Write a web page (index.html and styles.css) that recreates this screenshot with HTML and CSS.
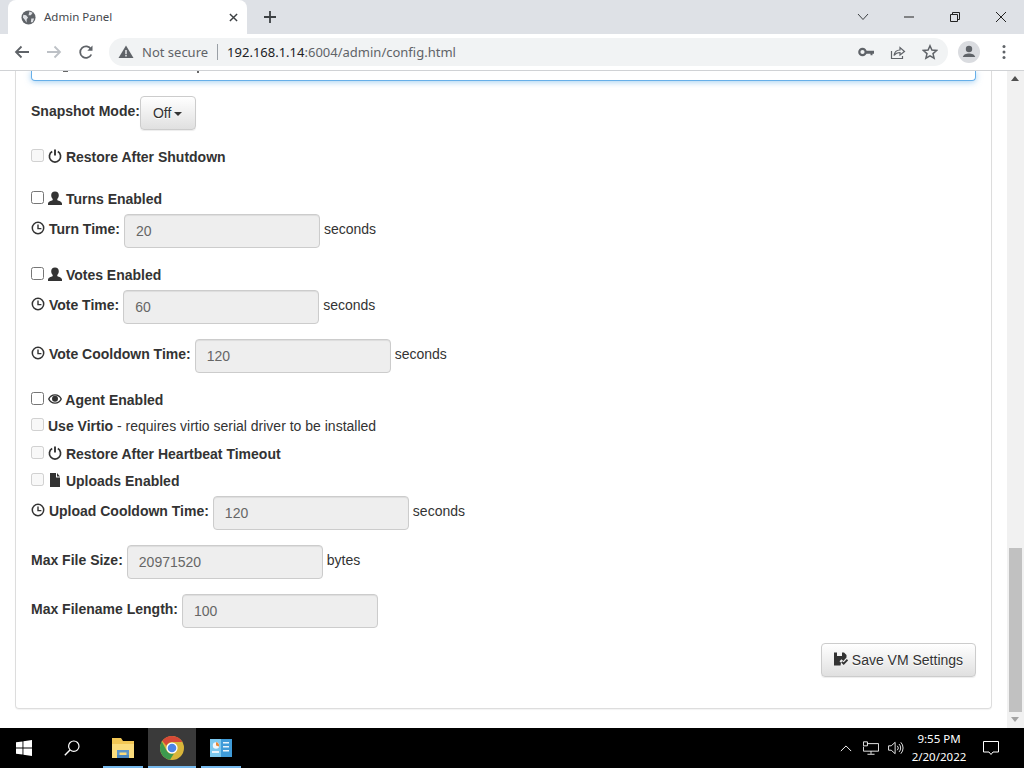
FILE: index.html
```html
<!DOCTYPE html>
<html lang="en">
<head>
<meta charset="utf-8">
<title>Admin Panel</title>
<link rel="stylesheet" href="styles.css">
</head>
<body>
<svg class="sprite" width="0" height="0" aria-hidden="true">
  <symbol id="i-power" viewBox="0 0 14 14"><path d="M4.200 2.600a5.600 5.600 0 1 0 5.600 0" fill="none" stroke="currentColor" stroke-width="1.700"/><path d="M7 .4v6.200" stroke="currentColor" stroke-width="1.900"/></symbol>
  <symbol id="i-user" viewBox="0 0 14 14"><path d="M7 .5c2.500 0 3.800 1.700 3.800 3.800 0 1.600-.8 3-1.500 3.700v1c0 .6 4.500 1.100 4.700 3.500V14H0v-1.500c.2-2.400 4.700-2.900 4.700-3.500V8C4 7.300 3.200 5.900 3.200 4.300 3.200 2.200 4.500.5 7 .5z" fill="currentColor"/></symbol>
  <symbol id="i-clock" viewBox="0 0 14 14"><circle cx="7" cy="7" r="5.700" fill="none" stroke="currentColor" stroke-width="1.500"/><path d="M7 3.400V7.600H10.400" fill="none" stroke="currentColor" stroke-width="1.400"/></symbol>
  <symbol id="i-eye" viewBox="0 0 14 14"><path d="M7 2.200C3.800 2.200 1.200 4.200 0 7c1.200 2.800 3.800 4.800 7 4.800s5.800-2 7-4.800c-1.200-2.800-3.800-4.800-7-4.800z" fill="currentColor"/><path d="M1.500 7C2.600 5 4.600 3.500 7 3.500S11.400 5 12.500 7c-1.100 2-3.100 3.500-5.500 3.500S2.600 9 1.500 7z" fill="#fff"/><circle cx="7" cy="6.800" r="3" fill="currentColor"/></symbol>
  <symbol id="i-file" viewBox="0 0 14 14"><path d="M2 0h6v4.500h4V14H2z M9 0l3 3.500H9z" fill="currentColor"/></symbol>
  <symbol id="i-floppy" viewBox="0 0 14 14"><path d="M0 .5h3v3.500h5V.5h2l2.500 2.500v2.500L9.300 9 7.500 7.200 5.500 9.200 7 10.700 6.500 13.500H0z" fill="currentColor"/><path d="M7.800 9.800l1.900 1.900 3.800-4" fill="none" stroke="currentColor" stroke-width="1.800"/></symbol>
</svg>

<header class="tabstrip">
  <div class="tab">
    <svg class="favicon" viewBox="0 0 16 16"><circle cx="8" cy="8" r="7.500" fill="#5f6368"/><path d="M2.500 5l3 .5 2 2.500-1.500 2v3.500L4 10.500 2 8zM9 1.500l3.500 1.500-2 2.500H8zM11 9h3l-1.500 4L10.500 13z" fill="#dfe1e5"/></svg>
    <span class="tab-title">Admin Panel</span>
    <svg class="tab-close" viewBox="0 0 10 10"><path d="M1 1l8 8M9 1l-8 8" stroke="#3c4043" stroke-width="1.600"/></svg>
  </div>
  <svg class="new-tab" viewBox="0 0 12 12"><path d="M6 0v12M0 6h12" stroke="#3c4043" stroke-width="1.800"/></svg>
  <div class="window-controls">
    <svg class="win-btn" viewBox="0 0 46 16"><path d="M18 5l5 5.500L28 5" fill="none" stroke="#3c4043" stroke-width="1"/></svg>
    <svg class="win-btn" viewBox="0 0 46 16"><path d="M18 8h10" stroke="#222" stroke-width="1"/></svg>
    <svg class="win-btn" viewBox="0 0 46 16"><path d="M18.500 5.500h7v7h-7zM20.500 5.500v-2h7v7h-2" fill="none" stroke="#222" stroke-width="1"/></svg>
    <svg class="win-btn" viewBox="0 0 46 16"><path d="M18 3l10 10M28 3L18 13" stroke="#222" stroke-width="1"/></svg>
  </div>
</header>

<nav class="toolbar">
  <svg class="tool" viewBox="0 0 32 16"><path d="M23 8H10M15.500 2.500L10 8l5.500 5.500" fill="none" stroke="#5f6368" stroke-width="1.800"/></svg>
  <svg class="tool" viewBox="0 0 32 16"><path d="M9 8h13M16.500 2.500L22 8l-5.500 5.500" fill="none" stroke="#bdc1c6" stroke-width="1.800"/></svg>
  <svg class="tool" viewBox="0 0 32 16"><path d="M21.300 10.500a5.800 5.800 0 1 1-.3-5.300" fill="none" stroke="#5f6368" stroke-width="1.800"/><path d="M22.500 1.500v5.200h-5.200z" fill="#5f6368"/></svg>
  <div class="omnibox">
    <svg class="warn" viewBox="0 0 16 16"><path d="M8 1.500L15.500 14H.5z" fill="#5f6368"/><path d="M7.300 6h1.400v4.200H7.300zM7.300 11h1.400v1.400H7.300z" fill="#f1f3f4"/></svg>
    <span class="not-secure">Not secure</span>
    <span class="divider"></span>
    <span class="url"><span class="host">192.168.1.14</span>:6004/admin/config.html</span>
    <span class="omni-icons">
      <svg class="omni-icon" viewBox="0 0 16 16"><circle cx="4.500" cy="8" r="3.200" fill="none" stroke="#5f6368" stroke-width="2.200"/><path d="M7.500 6.700H16V9.800H14.500V11.300H12.500V9.800H7.500z" fill="#5f6368"/></svg>
      <svg class="omni-icon" viewBox="0 0 16 16"><path d="M1.500 7v7.500h11V12" fill="none" stroke="#5f6368" stroke-width="1.200"/><path d="M4 11.500c.5-3.500 3-5.500 6-5.500V3.500L14.500 7.500 10 11V8.500c-2.500 0-4.500 1-6 3z" fill="none" stroke="#5f6368" stroke-width="1.200"/></svg>
      <svg class="omni-icon" viewBox="0 0 16 16"><path d="M8 1.800l1.900 4.300 4.700.4-3.600 3.100 1.100 4.600L8 11.800l-4.100 2.400L5 9.600 1.400 6.500l4.700-.4z" fill="none" stroke="#5f6368" stroke-width="1.500"/></svg>
    </span>
  </div>
  <svg class="avatar" viewBox="0 0 22 22"><circle cx="11" cy="11" r="11" fill="#dadce0"/><circle cx="11" cy="8" r="3.200" fill="#5f6368"/><path d="M4.800 16c.5-2.500 3.500-3.600 6.200-3.600s5.700 1.100 6.200 3.600z" fill="#5f6368"/></svg>
  <svg class="kebab" viewBox="0 0 4 16"><circle cx="2" cy="2.500" r="1.500" fill="#5f6368"/><circle cx="2" cy="8" r="1.500" fill="#5f6368"/><circle cx="2" cy="13.500" r="1.500" fill="#5f6368"/></svg>
</nav>

<div class="viewport">
  <main class="page">
    <form class="panel">
      <div class="textarea-tail"><span class="tail-g"></span><span class="tail-p"></span></div>

      <div class="field gap-15 snapshot">
        <label class="lbl">Snapshot Mode:</label>
        <button type="button" class="btn off-btn">Off<span class="caret"></span></button>
      </div>

      <div class="check gap-17"><input type="checkbox" disabled><b><svg class="ico"><use href="#i-power"/></svg> Restore After Shutdown</b></div>

      <div class="check gap-22"><input type="checkbox"><b><svg class="ico"><use href="#i-user"/></svg> Turns Enabled</b></div>
      <div class="field gap-5">
        <label class="lbl"><svg class="ico"><use href="#i-clock"/></svg> Turn Time:</label>
        <input class="num" type="text" value="20" disabled>
        <span class="unit">seconds</span>
      </div>

      <div class="check gap-17"><input type="checkbox"><b><svg class="ico"><use href="#i-user"/></svg> Votes Enabled</b></div>
      <div class="field gap-5">
        <label class="lbl"><svg class="ico"><use href="#i-clock"/></svg> Vote Time:</label>
        <input class="num" type="text" value="60" disabled>
        <span class="unit">seconds</span>
      </div>

      <div class="field gap-15">
        <label class="lbl"><svg class="ico"><use href="#i-clock"/></svg> Vote Cooldown Time:</label>
        <input class="num" type="text" value="120" disabled>
        <span class="unit">seconds</span>
      </div>

      <div class="check gap-17"><input type="checkbox"><b><svg class="ico"><use href="#i-eye"/></svg> Agent Enabled</b></div>
      <div class="check gap-6"><input type="checkbox" disabled><span><b>Use Virtio</b> - requires virtio serial driver to be installed</span></div>
      <div class="check gap-8"><input type="checkbox" disabled><b><svg class="ico"><use href="#i-power"/></svg> Restore After Heartbeat Timeout</b></div>
      <div class="check gap-7"><input type="checkbox" disabled><b><svg class="ico"><use href="#i-file"/></svg> Uploads Enabled</b></div>
      <div class="field gap-5">
        <label class="lbl"><svg class="ico"><use href="#i-clock"/></svg> Upload Cooldown Time:</label>
        <input class="num" type="text" value="120" disabled>
        <span class="unit">seconds</span>
      </div>

      <div class="field gap-15">
        <label class="lbl">Max File Size:</label>
        <input class="num" type="text" value="20971520" disabled>
        <span class="unit">bytes</span>
      </div>

      <div class="field gap-15">
        <label class="lbl">Max Filename Length:</label>
        <input class="num" type="text" value="100" disabled>
      </div>

      <div class="actions">
        <button type="button" class="btn save-btn"><svg class="ico"><use href="#i-floppy"/></svg> Save VM Settings</button>
      </div>
    </form>
  </main>
  <aside class="scrollbar">
    <span class="arrow-up"></span>
    <span class="thumb"></span>
    <span class="arrow-down"></span>
  </aside>
</div>

<footer class="taskbar">
  <div class="task-item">
    <svg class="task-icon" viewBox="0 0 16 16"><path d="M0 2.300L6.500 1.400V7.600H0zM7.400 1.300L16 0V7.600H7.400zM0 8.400H6.500V14.600L0 13.700zM7.400 8.400H16V16L7.400 14.700z" fill="#fff"/></svg>
  </div>
  <div class="task-item">
    <svg class="task-icon" viewBox="0 0 16 16"><circle cx="9.800" cy="6.200" r="5.200" fill="none" stroke="#fff" stroke-width="1.200"/><path d="M6 10L.8 15.300" stroke="#fff" stroke-width="1.400"/></svg>
  </div>
  <div class="task-item app first-app">
    <svg class="app-icon" viewBox="0 0 24 22"><path d="M1 1h9l2 3h11v17H1z" fill="#f2c755"/><path d="M1 7h22v14H1z" fill="#fbdc7c"/><path d="M6 18v-5h12v5h-2.500v-2.500h-7V18z" fill="#5c95c9"/><path d="M6 18h12v3H6z" fill="#4a85bd"/></svg>
  </div>
  <div class="task-item app active">
    <svg class="app-icon" viewBox="0 0 24 24"><circle cx="12" cy="12" r="12" fill="#d8b53a"/><path d="M12 0a12 12 0 0 1 10.400 6H12a6 6 0 0 0-5.600 3.800L2.300 5A12 12 0 0 1 12 0z" fill="#d64937"/><path d="M1.800 5.600A12 12 0 0 0 10 23.800l4-6.300a6 6 0 0 1-7.200-2.500z" fill="#3d9a4e"/><circle cx="12" cy="12" r="5.600" fill="#fff"/><circle cx="12" cy="12" r="4.300" fill="#4d85e6"/></svg>
  </div>
  <div class="task-item app last-app">
    <svg class="app-icon small" viewBox="0 0 22 18"><path d="M0 0h22v18H0z" fill="#3f9bd8"/><path d="M0 0h11v18H0z" fill="#7cc8ee"/><circle cx="6" cy="6.500" r="3.200" fill="#f4f7fa"/><path d="M6 6.500V3.300A3.200 3.200 0 0 1 9 7.500z" fill="#e5883a"/><path d="M2 12h7v2H2zM13 3h6v1.500h-6zM13 7h6v1.500h-6zM13 11h6v1.500h-6z" fill="#e8f3fa"/></svg>
  </div>
  <div class="tray">
    <svg class="tray-icon chevron" viewBox="0 0 14 8"><path d="M1 7l6-6 6 6" fill="none" stroke="#fff" stroke-width="1.100"/></svg>
    <svg class="tray-icon net" viewBox="0 0 18 16"><path d="M4.500 2.500h13V11H.5V6" fill="none" stroke="#fff"/><path d="M9 11v3M5 14.500h8" stroke="#fff"/><path d="M.5.500h4.500v4.500H.5z" fill="#000" stroke="#fff"/></svg>
    <svg class="tray-icon vol" viewBox="0 0 18 16"><path d="M.5 5.500h3L8 1.500v13l-4.500-4h-3z" fill="none" stroke="#fff"/><path d="M10.500 5.500a3.500 3.500 0 0 1 0 5M12.500 3.500a6.500 6.500 0 0 1 0 9M14.500 1.500a9.500 9.500 0 0 1 0 13" fill="none" stroke="#fff"/></svg>
    <div class="clock"><span>9:55 PM</span><span>2/20/2022</span></div>
    <svg class="tray-icon notify" viewBox="0 0 16 15"><path d="M.5.500h15v10.500H10l-2 2.500-2-2.500H.5z" fill="none" stroke="#fff"/></svg>
  </div>
</footer>
</body>
</html>
```
FILE: styles.css
```css
* { box-sizing: border-box; }
html, body { margin: 0; padding: 0; height: 768px; overflow: hidden; background: #fff; }
body { display: flex; flex-direction: column; font-family: "Liberation Sans", Arial, sans-serif; font-size: 14px; line-height: 20px; color: #333; }
.sprite { position: absolute; }

/* browser chrome */
.tabstrip { height: 34px; flex: none; background: #dee1e6; display: flex; align-items: center; padding-left: 8px; }
.tab { width: 239px; height: 34px; background: #fff; border-radius: 8px 8px 0 0; display: flex; align-items: center; padding: 0 9px 0 13px; }
.favicon { width: 15px; height: 15px; flex: none; }
.tab-title { margin-left: 8px; margin-top: -1px; flex: 1; font: 11.500px "Noto Sans", sans-serif; color: #45494e; }
.tab-close { width: 9px; height: 9px; flex: none; }
.new-tab { width: 12px; height: 12px; margin-left: 17px; flex: none; }
.window-controls { margin-left: auto; display: flex; }
.win-btn { width: 46px; height: 16px; }

.toolbar { height: 37px; flex: none; background: #fff; border-bottom: 1px solid #d0d2d5; display: flex; align-items: center; padding-left: 6px; }
.tool { width: 32px; height: 16px; flex: none; }
.omnibox { width: 839px; height: 28px; margin-left: 7px; margin-top: -1px; background: #f1f3f4; border-radius: 14px; display: flex; align-items: center; padding: 0 2px 0 9px; font: 13px "Noto Sans", sans-serif; color: #5f6368; flex: none; }
.warn { width: 16px; height: 16px; flex: none; }
.not-secure { margin-left: 8px; }
.divider { width: 1px; height: 16px; background: #9aa0a6; margin: 0 9px 0 9px; }
.url { flex: 1; }
.host { color: #202124; }
.omni-icons { display: flex; }
.omni-icon { width: 16px; height: 16px; margin: 0 8px; }
.avatar { width: 22px; height: 22px; margin-left: 10px; flex: none; }
.kebab { width: 4px; height: 16px; margin-left: 22px; flex: none; }

/* page */
.viewport { flex: 1; min-height: 0; display: flex; }
.page { width: 1007px; flex: none; padding: 0 15px; overflow: hidden; }
.panel { height: 638px; border: 1px solid #ddd; border-top: 0; border-radius: 0 0 4px 4px; box-shadow: 0 1px 1px rgba(0,0,0,.05); padding: 0 15px; display: flex; flex-direction: column; }
.textarea-tail { height: 10px; flex: none; display: flex; align-items: flex-start; border: 1px solid #66afe9; border-top: 0; border-radius: 0 0 4px 4px; box-shadow: 0 1px 6px rgba(102,175,233,.6); }
.tail-g { width: 5px; height: 1px; background: #666; margin-left: 31px; }
.tail-p { width: 2px; height: 2px; background: #666; margin-left: 129px; }

.field { display: flex; align-items: flex-start; height: 34px; flex: none; }
.lbl { font-weight: 700; padding-top: 5px; margin-right: 4px; }
.snapshot .lbl { margin-right: 0; }
.unit { padding-top: 5px; margin-left: 4px; }
.check { display: flex; height: 20px; flex: none; }
.check input { width: 13px; height: 13px; margin: 2px 4px 0 0; flex: none; }
.ico { display: inline-block; width: 14px; height: 14px; vertical-align: -1px; }
.gap-5 { margin-top: 5px; }
.gap-6 { margin-top: 6px; }
.gap-7 { margin-top: 7px; }
.gap-8 { margin-top: 8px; }
.gap-15 { margin-top: 15px; }
.gap-17 { margin-top: 17px; }
.gap-22 { margin-top: 22px; }

.num { width: 196px; height: 34px; padding: 6px 12px 6px 11px; border: 1px solid #ccc; border-radius: 4px; background: #eee; color: #666; font: inherit; box-shadow: inset 0 1px 1px rgba(0,0,0,.075); }
.btn { height: 34px; padding: 6px 12px; border: 1px solid #ccc; border-radius: 4px; background: linear-gradient(#fff, #e0e0e0); color: #333; font: inherit; text-shadow: 0 1px 0 #fff; box-shadow: 0 1px 1px rgba(0,0,0,.075); }
.off-btn { width: 56px; padding: 6px 0 6px 12px; text-align: left; }
.caret { display: inline-block; margin-left: 3px; vertical-align: middle; border-top: 4px solid #333; border-left: 4px solid transparent; border-right: 4px solid transparent; }
.actions { margin-top: 15px; display: flex; justify-content: flex-end; }
.save-btn { width: 155px; padding: 6px 0; white-space: nowrap; }

/* scrollbar */
.scrollbar { width: 17px; flex: none; background: #f1f1f1; display: flex; flex-direction: column; align-items: center; position: relative; }
.arrow-up, .arrow-down { position: absolute; left: 4px; border-left: 4.500px solid transparent; border-right: 4.500px solid transparent; }
.arrow-up { top: 5px; border-bottom: 5px solid #505050; }
.arrow-down { bottom: 6px; border-top: 5px solid #a3a3a3; }
.thumb { position: absolute; top: 477px; left: 2px; width: 13px; height: 164px; background: #c1c1c1; }

/* taskbar */
.taskbar { height: 40px; flex: none; background: #000; display: flex; align-items: stretch; }
.task-item { width: 48px; flex: none; display: flex; align-items: center; justify-content: center; position: relative; }
.task-icon { width: 16px; height: 16px; }
.app-icon { width: 24px; height: 24px; }
.app-icon.small { width: 22px; height: 18px; }
.app.first-app { margin-left: 3px; margin-right: 1px; }
.app.last-app { margin-left: 1px; }
.app::after { content: ""; position: absolute; left: 4px; right: 4px; bottom: 0; height: 2px; background: #76b9ed; }
.app.active { background: #3a3a3a; }
.app.active::after { left: 0; right: 0; }
.tray { margin-left: auto; display: flex; align-items: center; color: #fff; }
.tray-icon { flex: none; }
.chevron { width: 12px; height: 7px; margin-right: 11px; }
.net { width: 16px; height: 15px; margin-right: 9px; }
.vol { width: 16px; height: 14px; }
.clock { width: 70px; margin-left: 0; display: flex; flex-direction: column; align-items: center; font: 11.500px/18px "Noto Sans", sans-serif; }
.notify { width: 16px; height: 15px; margin: 0 25px 0 9px; }
```
